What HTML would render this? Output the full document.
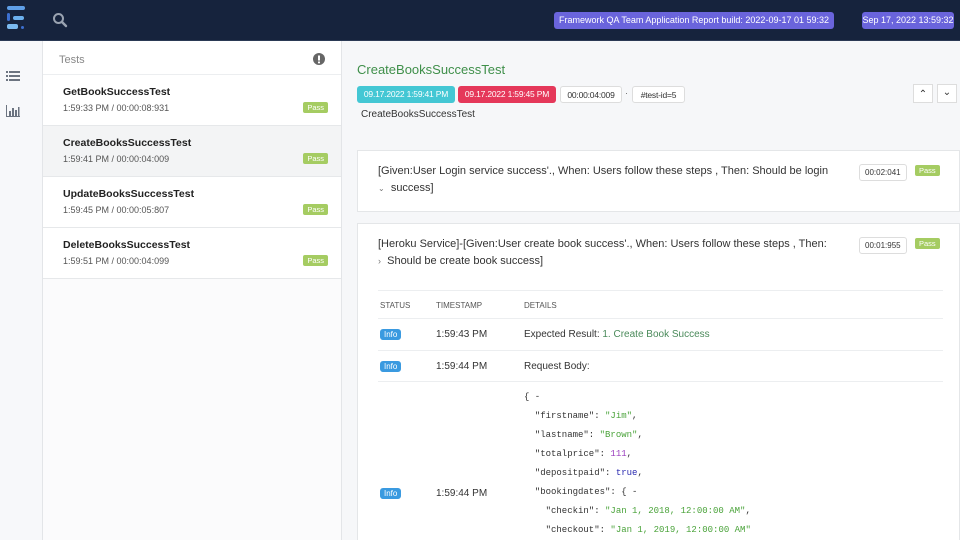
<!DOCTYPE html>
<html><head><meta charset="utf-8"><style>
*{box-sizing:border-box;margin:0;padding:0}
html,body{width:960px;height:540px;overflow:hidden}
body{font-family:"Liberation Sans",sans-serif;background:#f6f7f9;position:relative;color:#333}
.nav{position:absolute;left:0;top:0;width:960px;height:41px;background:#16233d;border-bottom:1px solid #2b3a55}
.badge{position:absolute;top:12px;height:17px;background:#6a64dc;color:#fff;font-size:9px;line-height:17px;border-radius:3px;white-space:nowrap;text-align:center}
.side{position:absolute;left:0;top:41px;width:43px;height:499px;background:#f7f8fa;border-right:1px solid #e3e5e8}
.list{position:absolute;left:43px;top:41px;width:299px;height:499px;background:#fbfbfc;border-right:1px solid #e3e5e8}
.lh{height:34px;background:#fff;border-bottom:1px solid #eceef0;padding:13px 0 0 16px;color:#888;font-size:11px}
.item{height:51px;border-bottom:1px solid #e6e8ea;padding:11px 0 0 20px;position:relative;background:#fff}
.item.act{background:#f3f4f5}
.item b{font-size:10.5px;color:#222;display:block}
.item span{font-size:9px;color:#555;display:block;margin-top:5px}
.pass{position:absolute;background:#a5cc62;color:#fff;font-size:7.5px;padding:1px 4px;border-radius:2px;font-style:normal}
.item .pass{right:13px;top:27px}
.main{position:absolute;left:342px;top:41px;width:618px;height:499px;overflow:hidden}
.tag{position:absolute;top:45px;height:17px;font-size:8.5px;line-height:17px;border-radius:3px;text-align:center;white-space:nowrap;letter-spacing:-0.2px}
.card{position:absolute;left:15px;width:603px;background:#fff;border:1px solid #e4e6e8}
.st{font-size:11px;color:#333;line-height:17px}
.tm{position:absolute;font-size:8px;border:1px solid #ddd;border-radius:3px;padding:3px 5px;background:#fff}
.info{display:inline-block;background:#3a9ae0;color:#fff;font-size:8px;padding:1px 4px;border-radius:3px}
.row{position:absolute;left:20px;width:565px;border-top:1px solid #eceef0;font-size:10px}
.mono{font-family:"Liberation Mono",monospace;font-size:9px;color:#333;position:absolute;line-height:19px}
.g{color:#4aa33a}.p{color:#9b3fbf}.b{color:#2a2ab0}
</style></head><body>
<div class="nav">
 <div style="position:absolute;left:7px;top:6px;width:18px;height:4px;background:#5f9fe8;border-radius:2px"></div>
 <div style="position:absolute;left:7px;top:13px;width:3px;height:8px;background:#3c6fd0;border-radius:2px"></div>
 <div style="position:absolute;left:13px;top:16px;width:11px;height:4px;background:#6cb0ee;border-radius:2px"></div>
 <div style="position:absolute;left:7px;top:24px;width:11px;height:5px;background:#7bbaf0;border-radius:2px"></div>
 <div style="position:absolute;left:21px;top:26px;width:3px;height:3px;background:#3c6fd0;border-radius:50%"></div>
 <svg style="position:absolute;left:52px;top:12px" width="16" height="16" viewBox="0 0 16 16"><circle cx="6.5" cy="6.5" r="4.5" fill="none" stroke="#9aa3b1" stroke-width="2"/><path d="M10 10l4 4" stroke="#9aa3b1" stroke-width="2.4" stroke-linecap="round"/></svg>
 <div class="badge" style="left:554px;width:280px">Framework QA Team Application Report build: 2022-09-17 01 59:32</div>
 <div class="badge" style="left:862px;width:92px">Sep 17, 2022 13:59:32</div>
</div>
<div class="side">
 <svg style="position:absolute;left:6px;top:29px" width="14" height="12"><g fill="#6c7480"><rect x="0" y="1" width="2" height="2"/><rect x="3" y="1" width="11" height="2"/><rect x="0" y="5" width="2" height="2"/><rect x="3" y="5" width="11" height="2"/><rect x="0" y="9" width="2" height="2"/><rect x="3" y="9" width="11" height="2"/></g></svg>
 <svg style="position:absolute;left:6px;top:64px" width="14" height="12"><g fill="#6c7480"><rect x="0" y="0" width="1" height="12"/><rect x="0" y="11" width="14" height="1"/><rect x="3" y="6" width="2" height="5"/><rect x="6" y="3" width="2" height="8"/><rect x="9" y="5" width="2" height="6"/><rect x="12" y="2" width="1.5" height="9"/></g></svg>
</div>
<div class="list">
 <div class="lh">Tests<svg style="position:absolute;left:270px;top:12px" width="12" height="12"><circle cx="6" cy="6" r="6" fill="#666"/><rect x="5" y="2.5" width="2" height="5" fill="#fff"/><rect x="5" y="8.5" width="2" height="1.8" fill="#fff"/></svg></div>
 <div class="item"><b>GetBookSuccessTest</b><span>1:59:33 PM / 00:00:08:931</span><i class="pass">Pass</i></div>
 <div class="item act"><b>CreateBooksSuccessTest</b><span>1:59:41 PM / 00:00:04:009</span><i class="pass">Pass</i></div>
 <div class="item"><b>UpdateBooksSuccessTest</b><span>1:59:45 PM / 00:00:05:807</span><i class="pass">Pass</i></div>
 <div class="item"><b>DeleteBooksSuccessTest</b><span>1:59:51 PM / 00:00:04:099</span><i class="pass">Pass</i></div>
</div>
<div class="main">
 <div style="position:absolute;left:15px;top:21px;font-size:13px;color:#3f8f4a">CreateBooksSuccessTest</div>
 <div class="tag" style="left:15px;width:98px;background:#44c7d4;color:#fff">09.17.2022 1:59:41 PM</div>
 <div class="tag" style="left:116px;width:98px;background:#e5385a;color:#fff">09.17.2022 1:59:45 PM</div>
 <div class="tag" style="left:218px;width:62px;background:#fff;border:1px solid #ddd;color:#333">00:00:04:009</div>
 <div style="position:absolute;left:283px;top:47px;font-size:9px;color:#666">·</div>
 <div class="tag" style="left:290px;width:53px;background:#fff;border:1px solid #ddd;color:#333">#test-id=5</div>
 <div style="position:absolute;left:571px;top:43px;width:20px;height:19px;border:1px solid #ddd;background:#fff;font-size:10px;text-align:center;line-height:19px">&#8963;</div>
 <div style="position:absolute;left:595px;top:43px;width:20px;height:19px;border:1px solid #ddd;background:#fff;font-size:10px;text-align:center;line-height:15px">&#8964;</div>
 <div style="position:absolute;left:19px;top:68px;font-size:10px;color:#333">CreateBooksSuccessTest</div>
 <div class="card" style="top:109px;height:62px">
  <div class="st" style="position:absolute;left:20px;top:12px;width:465px">[Given:User Login service success'., When: Users follow these steps , Then: Should be login<br><span style="font-size:8px;color:#777">&#8964;</span>&nbsp; success]</div>
  <div class="tm" style="left:501px;top:13px">00:02:041</div><span class="pass" style="left:557px;top:14px">Pass</span>
 </div>
 <div class="card" style="top:182px;height:330px">
  <div class="st" style="position:absolute;left:20px;top:12px;width:470px">[Heroku Service]-[Given:User create book success'., When: Users follow these steps , Then:<br><span style="font-size:9px;color:#777">&#8250;</span>&nbsp; Should be create book success]</div>
  <div class="tm" style="left:501px;top:13px">00:01:955</div><span class="pass" style="left:557px;top:14px">Pass</span>
  <div class="row" style="top:66px;height:28px;font-size:8px;color:#555"><span style="position:absolute;left:2px;top:10px">STATUS</span><span style="position:absolute;left:58px;top:10px">TIMESTAMP</span><span style="position:absolute;left:146px;top:10px">DETAILS</span></div>
  <div class="row" style="top:94px;height:32px"><span class="info" style="position:absolute;left:2px;top:10px">Info</span><span style="position:absolute;left:58px;top:10px">1:59:43 PM</span><span style="position:absolute;left:146px;top:10px">Expected Result: <span style="color:#4a8a5a">1. Create Book Success</span></span></div>
  <div class="row" style="top:126px;height:31px"><span class="info" style="position:absolute;left:2px;top:10px">Info</span><span style="position:absolute;left:58px;top:10px">1:59:44 PM</span><span style="position:absolute;left:146px;top:10px">Request Body:</span></div>
  <div class="row" style="top:157px;height:170px"><span class="info" style="position:absolute;left:2px;top:106px">Info</span><span style="position:absolute;left:58px;top:106px">1:59:44 PM</span>
   <div class="mono" style="left:146px;top:6px;white-space:pre">{ -
  "firstname": <span class="g">"Jim"</span>,
  "lastname": <span class="g">"Brown"</span>,
  "totalprice": <span class="p">111</span>,
  "depositpaid": <span class="b">true</span>,
  "bookingdates": { -
    "checkin": <span class="g">"Jan 1, 2018, 12:00:00 AM"</span>,
    "checkout": <span class="g">"Jan 1, 2019, 12:00:00 AM"</span></div>
  </div>
 </div>
</div>
</body></html>
